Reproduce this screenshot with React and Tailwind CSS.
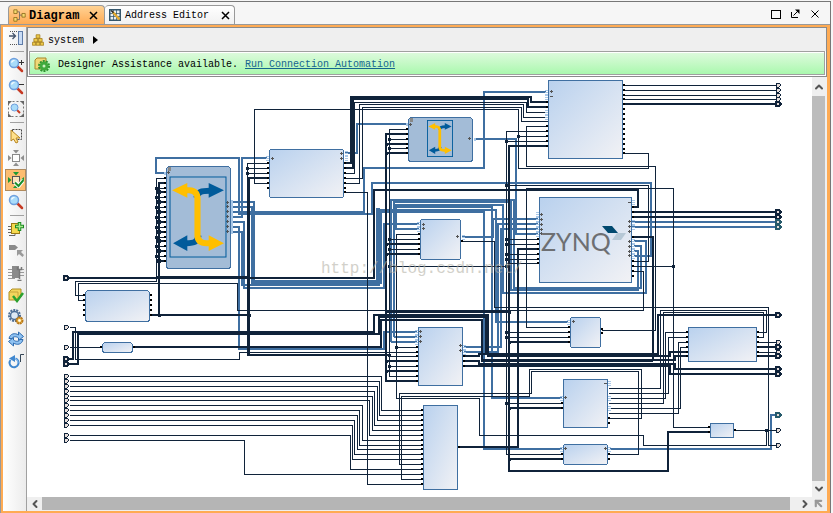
import { ChevronDown, ChevronLeft, ChevronRight, ChevronUp, ArrowUpLeft } from "lucide-react";

const THIN_WIRES = [
  // memory block
  "M624 85H775M624 90H775M624 95H775M624 99H775",
  "M268 183H254V109H518V168H648V153H624M518 136H548",
  "M344 173H354V102H526V112H548",
  "M344 178H362V107H521V121H548",
  "M344 183H359V104H523V117H548",
  "M548 126H526V166H655V330H601",
  "M548 131H506V454H563M506 141H548",
  // left side
  "M166 178H156V281H75V295H85",
  "M85 300H78V283H237V310H643V271H633",
  "M268 163H247V278M247 168H268M247 173H268",
  "M344 192H367V484H423",
  "M69 327H75V359H239V352H418",
  "M69 347H102",
  // clock and reset nets
  "M408 129H389V376H418M389 139H408M389 148H408M389 239H420M389 249H420M389 266H506M389 356H418M389 366H418",
  "M420 234H396V398H479V435H643V445H766V430M396 347H418",
  "M461 241H494V307H768V445H775",
  "M506 185H648V261H633",
  "M570 327H526V188H673V427H710M633 266H673",
  "M506 239H539M506 244H539M506 254H539M506 259H539M506 263H539",
  "M506 332H570M506 337H570M506 403H563",
  // right side
  "M608 388H660V310H766V332H757",
  "M608 403H663V312H763V337H757",
  "M608 393H668V337H688",
  "M608 398H665V332H688",
  "M608 408H680V347H688",
  "M608 413H678V342H688",
  "M608 418H641V369H529V396H401V479H423",
  "M608 454H638V371H531V393H399V464H423",
  "M757 342H775M757 352H775M735 430H775",
];

// [source y, turning x, target y]
const CONCAT_WIRES = [
  [376, 381, 410],
  [381, 379, 415],
  [386, 377, 420],
  [391, 374, 425],
  [396, 372, 430],
  [400, 369, 435],
  [405, 362, 440],
  [410, 359, 445],
  [415, 357, 449],
  [420, 354, 454],
  [425, 352, 459],
  [435, 350, 469],
  [440, 244, 474],
];

const THICK_WIRES = [
  "M624 104H775",
  "M68 278H374V190H638V207H632",
  "M344 163H351V97H531V102H548",
  "M344 168H353V99H528V107H548",
  "M166 183H159V315M150 315H250",
  "M408 134H386V381H418M386 144H408M386 153H408M386 244H420M386 254H420M386 361H418M386 371H418",
  "M548 146H509V471H668V432H710M509 342H570M509 408H563M509 459H563",
  "M540 249H518V447H458",
  "M632 212H775M632 217H775",
  "M633 237H653V361",
  "M68 359H73V332H374V315H488V356H670V352H688",
  "M68 364H78V334H379V317H486V354H658",
  "M133 347H381V320H482V361H653M482 360H675V356H688",
  "M463 356H479V354H658V315H775",
  "M463 361H479V364H675V369H775",
  "M463 366H670V374H775",
  "M757 347H775M757 356H775",
];

const BUS_WIRES = [
  "M166 173H156V158H239V212H364V168H484V92H546",
  "M231 217H242V158H267",
  "M231 212H239V214H372V183H651V256H634",
  "M345 153H357V124H406",
  "M231 202H254V281H377V208M231 207H252V285H379V208",
  "M231 222H244V288H384V224H419",
  "M231 227H239V349H384V332H417",
  "M231 232H242V285H379M253 283H381V209",
  "M391 342H417M391 342V200H514V288H641V246H634",
  "M394 337H417M394 337V202H511V290H638V251H634",
  "M419 229H396V205H503V293H646V241H634",
  "M377 212H484V449H562",
  "M379 210H496V322H568",
  "M394 207H492V398H562",
  "M474 139H516V234H538",
  "M462 237H493V219H538",
  "M464 352H498V224H538",
  "M464 347H501V229H538",
  "M632 222H775M632 227H775",
  "M610 449H771V415H775",
];

const BLOCKS = [
  { x: 85, y: 290, w: 65, h: 31, r: 3, left: [295, 300, 305, 310, 315], right: [295, 300, 305, 310, 315] },
  { x: 102, y: 342, w: 31, h: 10, r: 3, left: [347], right: [347] },
  { x: 269, y: 149, w: 75, h: 48, r: 2, left: [163, 168, 173, 178, 183, 188], right: [163, 168, 173, 178, 183, 188, 192], plus: [[271, 158], [340, 153], [340, 158]], bus: [[267, 158], [346, 153], [346, 158]] },
  { x: 420, y: 219, w: 41, h: 40, r: 2, left: [234, 239, 244, 249, 254], right: [241], plus: [[422, 224], [422, 228], [456, 236]], bus: [[418, 224], [418, 229], [463, 237]] },
  { x: 548, y: 80, w: 75, h: 78, r: 1, left: [102, 107, 126, 131, 136, 141, 146], right: [85, 90, 95, 99, 104, 109, 114, 119, 124, 129, 134, 139, 144, 149, 153], plus: [[550, 91]], minus: [[550, 96]], bus: [[546, 92], [546, 97], [546, 112], [546, 117]] },
  { x: 539, y: 197, w: 93, h: 85, r: 1, left: [239, 244, 249, 254, 259, 263], right: [207, 212, 217, 237, 261, 266, 271, 276], plus: [[540, 214], [540, 219], [540, 224], [540, 229], [540, 233], [628, 221], [628, 226], [628, 231], [628, 241], [628, 246], [628, 251], [628, 255]], minus: [[628, 202]], bus: [[537, 214], [537, 219], [537, 224], [537, 229], [537, 234], [633, 202], [633, 222], [633, 227], [633, 241], [633, 246], [633, 251], [633, 256]] },
  { x: 418, y: 327, w: 45, h: 58, r: 0, left: [347, 352, 356, 361, 366, 371, 376, 381], right: [356, 361, 366], plus: [[419, 331], [419, 336], [419, 341], [459, 345], [459, 350]], bus: [[416, 332], [416, 337], [416, 342], [464, 347], [464, 352]] },
  { x: 423, y: 405, w: 35, h: 84, r: 1, left: [410, 415, 420, 425, 430, 435, 440, 445, 449, 454, 459, 464, 469, 474, 479, 484], right: [447] },
  { x: 570, y: 317, w: 31, h: 30, r: 2, left: [327, 332, 337, 342], right: [329, 333], plus: [[572, 321]], bus: [[568, 322]] },
  { x: 563, y: 379, w: 45, h: 48, r: 0, left: [403, 408], right: [418, 423], plus: [[564, 397]], minus: [[604, 383]], bus: [[561, 398], [609, 383], [609, 398], [609, 408]] },
  { x: 563, y: 444, w: 45, h: 20, r: 2, left: [454, 459], right: [454, 459], plus: [[564, 448], [604, 448]], bus: [[561, 449], [609, 449]] },
  { x: 688, y: 327, w: 69, h: 34, r: 0, left: [332, 337, 342, 347, 352, 356], right: [332, 337, 342, 347, 352, 356] },
  { x: 710, y: 423, w: 24, h: 14, r: 0, left: [427, 432], right: [430] },
];

const DOTS = [
  [247, 168], [247, 173], [389, 139], [386, 144], [389, 148], [386, 153], [389, 239], [386, 244], [389, 249], [386, 254],
  [389, 266], [396, 347], [389, 355], [386, 361], [389, 366], [386, 371], [506, 141], [518, 136], [506, 185], [506, 239],
  [506, 244], [506, 254], [506, 259], [506, 266], [506, 332], [506, 337], [509, 342], [506, 403], [509, 408], [509, 459],
  [509, 312], [673, 266], [766, 430], [159, 315], [249, 315], [157, 277], [248, 277],
];

const SWITCH_THIN = [188, 197, 207, 217, 227, 237, 246, 256];
const SWITCH_THICK = [192, 202, 212, 222, 232, 241, 251, 261];

const PORTS = [
  ...[327, 347, 376, 381, 386, 391, 396, 400, 405, 410, 415, 420, 425, 435, 440].map((y) => [63, y, "thin"]),
  ...[278, 359, 364].map((y) => [63, y, "thick"]),
  ...[85, 90, 95, 99, 342, 352, 430, 445].map((y) => [775, y, "thin"]),
  ...[104, 212, 217, 315, 347, 356, 369, 374].map((y) => [775, y, "thick"]),
  ...[222, 227, 415].map((y) => [775, y, "bus"]),
];

const INK = "#10233a";
const BLUE = "#3f6fa1";

function Port({ x, y, kind }) {
  const color = kind === "bus" ? "#265a6b" : INK;
  return (
    <path
      d={`M${x + 1} ${y - 2}H${x + 4}L${x + 6} ${y}L${x + 4} ${y + 2}H${x + 1}Z`}
      fill="#e6dcd8"
      stroke={color}
      strokeWidth={kind === "thin" ? 1 : 2}
    />
  );
}

function Plus({ x, y, minus }) {
  return <path d={`M${x} ${y + 0.5}h3${minus ? "" : `M${x + 1.5} ${y - 1}v3`}`} stroke="#555" />;
}

function Block({ x, y, w, h, r, left = [], right = [], plus = [], minus = [], bus = [] }) {
  return (
    <g>
      {bus.map(([bx, by]) => (
        <path key={`${bx}-${by}`} d={`M${bx - 1} ${by - 2}h3M${bx - 1} ${by + 2}h3M${bx - 1} ${by}h3`} stroke="#a9c8e8" />
      ))}
      {left.map((py) => (
        <rect key={`l${py}`} x={x - 2} y={py - 1} width="3" height="2" fill="#000" />
      ))}
      {right.map((py) => (
        <rect key={`r${py}`} x={x + w} y={py - 1} width="2" height="2" fill="#000" />
      ))}
      <rect x={x + 0.5} y={y + 0.5} width={w - 1} height={h} rx={r} fill="url(#block)" stroke={BLUE} />
      {plus.map(([px, py]) => (
        <Plus key={`p${px}-${py}`} x={px} y={py} />
      ))}
      {minus.map(([px, py]) => (
        <Plus key={`m${px}-${py}`} x={px} y={py} minus />
      ))}
    </g>
  );
}

function Crossbar({ x, y, width, height, frame }) {
  return (
    <svg x={x} y={y} width={width} height={height} viewBox="0 0 57 83" preserveAspectRatio="none" shapeRendering="auto">
      <rect x="1" y="1" width="55" height="81" fill="none" stroke="#005b9b" strokeWidth={frame} />
      <path d="M27 22C28 16 32 15 40 15M29 60C28 67 25 68 17 68" fill="none" stroke="#005b9b" strokeWidth="6" />
      <path d="M39 7L54 14.500L39 22ZM18 60L4 68L18 76Z" fill="#005b9b" />
      <path d="M17 14.500H20Q28 15 28 23V60Q28 68 37 68H40" fill="none" stroke="#ffbf00" strokeWidth="6" />
      <path d="M18 7L3 14.500L18 22ZM39 60L54 68L39 76Z" fill="#ffbf00" />
    </svg>
  );
}

function Schematic() {
  return (
    <svg width="785" height="420" viewBox="27 77 785 420" className="block shrink-0" shapeRendering="crispEdges" role="img" aria-label="system">
      <defs>
        <linearGradient id="block" x1="0" y1="0" x2="1" y2="1">
          <stop offset="0" stopColor="#b9d1ee" />
          <stop offset="1" stopColor="#f2f2f5" />
        </linearGradient>
      </defs>

      <g fill="none" stroke={BLUE} strokeWidth="2">
        {BUS_WIRES.map((d) => (
          <path key={d} d={d} />
        ))}
      </g>
      <g fill="none" stroke={INK} transform="translate(0.5 0.5)">
        {THIN_WIRES.map((d) => (
          <path key={d} d={d} />
        ))}
        {CONCAT_WIRES.map(([from, turn, to]) => (
          <path key={from} d={`M69 ${from}H${turn}V${to}H423`} />
        ))}
        {SWITCH_THIN.map((y) => (
          <path key={y} d={`M156 ${y}H166`} />
        ))}
      </g>
      <g fill="none" stroke={INK} strokeWidth="2">
        {THICK_WIRES.map((d) => (
          <path key={d} d={d} />
        ))}
        {SWITCH_THICK.map((y) => (
          <path key={y} d={`M158 ${y}H166`} />
        ))}
        <path d="M268 178H248M157 277H249M249 355H390M385 312H509" strokeWidth="2" />
        <path d="M248.500 177V356M385 311.500H509" strokeWidth="3" />
      </g>
      <g fill={INK}>
        {DOTS.map(([x, y]) => (
          <rect key={`${x}-${y}`} x={x - 1} y={y - 1} width="3" height="3" />
        ))}
        {SWITCH_THIN.map((y) => (
          <rect key={y} x="155" y={y - 1} width="3" height="3" />
        ))}
        {SWITCH_THICK.map((y) => (
          <rect key={y} x="157" y={y - 2} width="4" height="4" />
        ))}
      </g>

      {BLOCKS.map((block) => (
        <Block key={`${block.x}-${block.y}`} {...block} />
      ))}

      {/* AXI interconnects */}
      <g>
        {[178, 183, ...SWITCH_THIN, ...SWITCH_THICK].map((y) => (
          <rect key={y} x="164" y={y - 1} width="3" height="2" />
        ))}
        {[129, 134, 139, 144, 148, 153].map((y) => (
          <rect key={y} x="406" y={y - 1} width="3" height="2" />
        ))}
        <path d="M164 173h3M231.500 200V234M406 124h3M474 139h2" stroke="#a9c8e8" strokeWidth="3" />
        <rect x="166.500" y="166.500" width="64" height="102" rx="3" fill="#a3bcd7" stroke={BLUE} />
        <rect x="408.500" y="117.500" width="64" height="44" rx="3" fill="#a3bcd7" stroke={BLUE} />
        <rect x="168" y="167" width="3" height="4" fill="#888" />
        <rect x="410" y="118" width="3" height="4" fill="#888" />
        <Plus x={167} y={172} />
        <Plus x={409} y={124} />
        <Plus x={468} y={138} />
        {[202, 206, 211, 216, 221, 226, 231].map((y) => (
          <Plus key={y} x={226} y={y} />
        ))}
        <Crossbar x={169} y={176} width={58} height={82} frame={1} />
        <Crossbar x={427} y={120} width={26} height={37} frame={2} />
      </g>

      {PORTS.map(([x, y, kind]) => (
        <Port key={`${x}-${y}`} x={x} y={y} kind={kind} />
      ))}

      <text x="541" y="251" fontSize="25" fill="#6d6f72" className="font-['Lato'] font-normal">
        ZYNQ
      </text>
      <g shapeRendering="auto">
        <path d="M602 226H612L618 233H608Z" fill="#00496f" />
        <path d="M617 233H626L621 240H612Z" fill="#b6c8d6" />
      </g>
      <text x="321" y="273" fontSize="16" fill="#b5b3a8" opacity="0.6" className="font-['Liberation_Mono',monospace]">
        http://blog.csdn.net/
      </text>
    </svg>
  );
}

function Icon({ children, size = 16 }) {
  return (
    <svg width={size} height={size} viewBox="0 0 16 16" fill="none" aria-hidden="true">
      {children}
    </svg>
  );
}

const lens = (
  <>
    <path d="M9 9L14 14" stroke="#c63a24" strokeWidth="2.500" strokeLinecap="round" />
    <circle cx="6" cy="6" r="4.500" fill="#a9dcfa" stroke="#6f9fdd" strokeWidth="1.500" />
    <path d="M3.500 5.500Q4 3.500 6.500 3.500" stroke="#fff" strokeWidth="1.200" />
  </>
);

function pads(color) {
  return <path d={"M5 0H11L8 3.500ZM5 16H11L8 12.500ZM0 5V11L3.500 8ZM16 5V11L12.500 8Z"} fill={color} />;
}

const TOOLS = [
  {
    label: "Hide toolbar",
    icon: (
      <>
        <path d="M2 1.500H11M2 14.500H11" stroke="#555" strokeDasharray="1 1" />
        <path d="M1 6H7M4.500 3L7.500 6L4.500 9" stroke="#45546b" strokeWidth="1.300" />
        <rect x="10.500" y="1.500" width="4" height="13" fill="#c9dcf5" stroke="#5f7ca8" />
      </>
    ),
  },
  null,
  { label: "Zoom in", icon: <>{lens}<path d="M11 5.500H16M13.500 3V8" stroke="#333" /></> },
  { label: "Zoom out", icon: <>{lens}<path d="M11 5.500H16" stroke="#333" /></> },
  {
    label: "Zoom fit",
    icon: (
      <>
        <rect x="0.500" y="0.500" width="15" height="15" stroke="#777" strokeDasharray="2 2" />
        <path d="M0 0H4L0 4ZM16 0V4L12 0ZM0 16V12L4 16ZM16 16H12L16 12Z" fill="#666" />
        <path d="M8.500 8.500L12 12" stroke="#c63a24" strokeWidth="2" />
        <circle cx="6.500" cy="6.500" r="3.500" fill="#a9dcfa" stroke="#6f9fdd" />
      </>
    ),
  },
  null,
  {
    label: "Select area",
    icon: (
      <>
        <rect x="4.500" y="1.500" width="9" height="10" stroke="#444" strokeDasharray="2 1" />
        <path d="M3 2V13L5.500 11L8 15L10 14L8 10H12Z" fill="#ffe08a" stroke="#b8861f" />
      </>
    ),
  },
  { label: "Fit selection", icon: <>{pads("#8f8f8f")}<rect x="4.500" y="4.500" width="7" height="7" fill="#fff" stroke="#8a8a8a" /></> },
  {
    label: "Auto fit selection",
    active: true,
    icon: (
      <>
        {pads("#1f9a35")}
        <rect x="4.500" y="4.500" width="7" height="7" fill="#fbe3bd" stroke="#555" />
        <path d="M7 10.500L10.500 14L15.500 8" stroke="#fff" strokeWidth="4" />
        <path d="M7 10.500L10.500 14L15.500 8" stroke="#1c8f2c" strokeWidth="2" />
      </>
    ),
  },
  { label: "Find", icon: lens },
  null,
  {
    label: "Add IP",
    icon: (
      <>
        <path d="M0 5.500H4M0 8.500H4M0 11.500H4M1 14.500H7V12" stroke="#666" />
        <rect x="3.500" y="2.500" width="8" height="10" fill="#f5d94f" stroke="#9a7a14" />
        <path d="M11.500 1V10M7 5.500H16" stroke="#1c8a25" strokeWidth="3.500" />
        <path d="M11.500 2V9M8 5.500H15" stroke="#a6ec8c" strokeWidth="1.500" />
      </>
    ),
  },
  {
    label: "Make external",
    icon: (
      <>
        <path d="M1 2H7L10 4.500L7 7H1Z" fill="#8a8a8a" />
        <path d="M9 7H15L13 9L16 12L14.500 14L11 11L9 13Z" fill="#9a9a9a" />
      </>
    ),
  },
  {
    label: "Customize block",
    icon: (
      <>
        <path d="M0 4.500H16M0 7.500H16M0 10.500H16M0 13.500H7" stroke="#999" />
        <rect x="4" y="1" width="7" height="12" fill="#8a8a8a" />
        <path d="M11.500 4V14M9.500 2V4.500H13.500V2M9.500 15.500H13.500" stroke="#777" strokeWidth="1.500" />
      </>
    ),
  },
  {
    label: "Validate design",
    icon: (
      <>
        <path d="M1 5L4 2H13V10L10 13H1Z" fill="#f3d65d" stroke="#b08e24" />
        <path d="M1 5H10V13" stroke="#c9a53a" />
        <path d="M5 9L9 14L15 6" stroke="#2aa12f" strokeWidth="2.500" />
      </>
    ),
  },
  {
    label: "Settings",
    icon: (
      <>
        <circle cx="6.500" cy="6.500" r="5.500" stroke="#4d6e96" strokeWidth="2" strokeDasharray="2 1" />
        <circle cx="6.500" cy="6.500" r="4" fill="#dce8f4" stroke="#4d6e96" strokeWidth="1.500" />
        <circle cx="11.500" cy="11.500" r="3" fill="#f6c95a" stroke="#b97819" strokeWidth="2" strokeDasharray="2 0.500" />
        <circle cx="11.500" cy="11.500" r="1.200" fill="#fff" />
      </>
    ),
  },
  {
    label: "Refresh",
    icon: (
      <>
        <path d="M1 7.500C2 2.500 7 1.500 10.500 4V1L15.500 5.500L10.500 9.500V7C8 5 5 5.500 4 7.500Z" fill="#8fc2f2" stroke="#2f6cb0" />
        <path d="M15 8.500C14 13.500 9 14.500 5.500 12V15L0.500 10.500L5.500 6.500V9C8 11 11 10.500 12 8.500Z" fill="#8fc2f2" stroke="#2f6cb0" />
      </>
    ),
  },
  {
    label: "Regenerate layout",
    icon: (
      <>
        <path d="M12.500 9V1.500H16" stroke="#345" />
        <path d="M7.500 5.500A4.500 4.500 0 1 1 2.500 7" stroke="#3f87cf" strokeWidth="2" />
        <path d="M7.500 5.500A4.500 4.500 0 0 1 10 10" stroke="#8fbfee" />
        <path d="M1 5.500L7 2V9Z" fill="#3f87cf" />
      </>
    ),
  },
];

function Toolbar() {
  return (
    <div className="flex w-[24px] shrink-0 flex-col border-r border-[#a0a0a0] bg-linear-to-r from-white to-[#ececec]">
      {TOOLS.map((tool, i) =>
        tool ? (
          <button
            key={tool.label}
            type="button"
            aria-label={tool.label}
            className={
              tool.active
                ? "ml-[2px] flex h-[22px] items-center justify-center border border-[#b08a5c] bg-[#fdbd70]"
                : "ml-[2px] flex h-[22px] items-center justify-center"
            }
          >
            <Icon>{tool.icon}</Icon>
          </button>
        ) : (
          <div key={i} className="my-0.5 mr-[2px] ml-[7px] h-px shrink-0 bg-[#a0a0a0]" />
        )
      )}
    </div>
  );
}

function CloseMark() {
  return (
    <svg width="9" height="9" viewBox="0 0 9 9" aria-hidden="true">
      <path d="M1 1L8 8M8 1L1 8" stroke="#000" strokeWidth="1.500" />
    </svg>
  );
}

function TabBar() {
  return (
    <div className="flex h-[22px] shrink-0 items-end pl-2">
      <div className="flex h-[19px] w-[97px] items-center rounded-t-sm border border-b-0 border-[#999] bg-linear-to-b from-[#ffd293] to-[#ffab53] pl-1">
        <Icon size={13}>
          <path d="M5 3.500H8V13H5M8 7.500H11" stroke="#666" />
          <path d="M1 1H5V5.500H1ZM1 10.500H5V15H1ZM11 5.500H15V10H11Z" fill="#f6dc72" stroke="#8a6a1a" />
        </Icon>
        <button type="button" className="ml-[3px] pt-px font-bold text-[12px] leading-4">
          Diagram
        </button>
        <button type="button" aria-label="Close Diagram" className="ml-auto pr-1.5">
          <CloseMark />
        </button>
      </div>
      <div className="flex h-[19px] w-[130px] items-center rounded-t-sm border border-b-0 border-l-0 border-[#999] bg-linear-to-b from-white to-[#f1f1f1] pl-1">
        <Icon size={12}>
          <rect x="1" y="1" width="14" height="14" fill="#e8eef2" stroke="#35566b" strokeWidth="2" />
          <path d="M1 6H15M1 10H15M6 1V15M10 1V15" stroke="#35566b" />
          <path d="M5 4L14 14" stroke="#e5a92c" strokeWidth="3" />
          <path d="M3 2L6 5" stroke="#222" strokeWidth="2" />
        </Icon>
        <button type="button" className="ml-1 whitespace-nowrap pt-[2px] text-[10px] leading-4">
          Address Editor
        </button>
        <button type="button" aria-label="Close Address Editor" className="ml-auto pr-1">
          <CloseMark />
        </button>
      </div>
      <div className="mr-[11px] mb-[5px] ml-auto flex items-center gap-[9px]">
        <button type="button" aria-label="Maximize" className="h-[9px] w-[10px] border border-black" />
        <button type="button" aria-label="Float">
          <svg width="10" height="10" viewBox="0 0 10 10" fill="none" aria-hidden="true">
            <path d="M1.500 3V8.500H8M3.500 6.500L8 2" stroke="#000" />
            <path d="M5 0.500H9.500V5Z" fill="#000" />
          </svg>
        </button>
        <button type="button" aria-label="Close" className="ml-[2px]">
          <svg width="8" height="8" viewBox="0 0 8 8" aria-hidden="true">
            <path d="M0.500 0.500L7.500 7.500M7.500 0.500L0.500 7.500" stroke="#000" />
          </svg>
        </button>
      </div>
    </div>
  );
}

function Header() {
  return (
    <div className="shrink-0 border border-[#8a8a8a] bg-white pb-px">
      <nav className="flex h-[23px] items-center bg-[#efefef] pl-1">
        <Icon size={12}>
          <path d="M5.500 1H10.500V5.500H5.500ZM2.500 6H7.500V10.500H2.500ZM8.500 6H13.500V10.500H8.500ZM0.500 11H5V15H0.500ZM5.500 11H10.500V15H5.500ZM11 11H15.500V15H11Z" fill="#ecc94a" stroke="#a17a17" />
        </Icon>
        <button type="button" className="ml-1 pt-[2px] text-[10px] leading-4">
          system
        </button>
        <span className="ml-[9px] h-0 w-0 border-y-4 border-l-[5px] border-y-transparent border-l-black" />
      </nav>
      <div className="ml-px mr-px border border-[#a0a0a0] bg-white pt-px">
        <div className="flex h-[21px] items-center bg-linear-to-b from-[#dcfadc] to-[#aaf8ae] pl-1 text-[10px] leading-4">
          <Icon>
            <path d="M1 4L3 2H12V11L10 13H1Z" fill="#f0d878" stroke="#a8862a" />
            <circle cx="10" cy="10" r="5" stroke="#2d8f2d" strokeWidth="2" strokeDasharray="2 1.100" />
            <circle cx="10" cy="10" r="4.500" fill="#3faa3c" />
            <circle cx="10" cy="10" r="1.500" fill="#c9f0c0" />
          </Icon>
          <span className="ml-2 whitespace-nowrap pt-[2px]">Designer Assistance available.</span>
          <a href="#connect" className="ml-[7px] whitespace-nowrap pt-[2px] text-[#15658f] underline">
            Run Connection Automation
          </a>
        </div>
      </div>
    </div>
  );
}

export default function App() {
  return (
    <div className="h-screen overflow-hidden bg-[#f6f6f6] pt-px pr-[2px] font-['Liberation_Mono',monospace] text-black">
      <div className="flex h-full flex-col border-t border-r border-[#777]">
        <TabBar />
        <div className="flex min-h-0 flex-1 border-t border-l border-[#999]">
          <div className="flex min-w-0 flex-1 border-2 border-r-3 border-[#ffab53] bg-[#efefef]">
            <Toolbar />
            <div className="flex min-w-0 flex-1 flex-col">
              <Header />
              <div className="flex min-h-0 flex-1 pr-[2px]">
                <main className="min-w-0 flex-1 overflow-hidden bg-white">
                  <Schematic />
                </main>
                <div className="flex w-[13px] shrink-0 flex-col items-center">
                  <button type="button" aria-label="Scroll up" className="flex h-[19px] items-center">
                    <ChevronUp size={12} strokeWidth={4} color="#555" />
                  </button>
                  <div className="w-full flex-1 bg-[#bcbcbc]" />
                  <button type="button" aria-label="Scroll down" className="flex h-4 items-center">
                    <ChevronDown size={12} strokeWidth={4} color="#555" />
                  </button>
                </div>
              </div>
              <div className="mb-px flex h-[13px] shrink-0 items-center pr-[2px]">
                <button type="button" aria-label="Scroll left" className="flex w-[15px] justify-center">
                  <ChevronLeft size={12} strokeWidth={4} color="#555" />
                </button>
                <div className="h-full flex-1 bg-[#b5b5b5]" />
                <button type="button" aria-label="Scroll right" className="flex w-[22px] justify-end pr-px">
                  <ChevronRight size={12} strokeWidth={4} color="#555" />
                </button>
                <button type="button" aria-label="Navigator" className="flex w-[13px] justify-center">
                  <ArrowUpLeft size={13} strokeWidth={4} color="#999" />
                </button>
              </div>
            </div>
          </div>
        </div>
      </div>
    </div>
  );
}
